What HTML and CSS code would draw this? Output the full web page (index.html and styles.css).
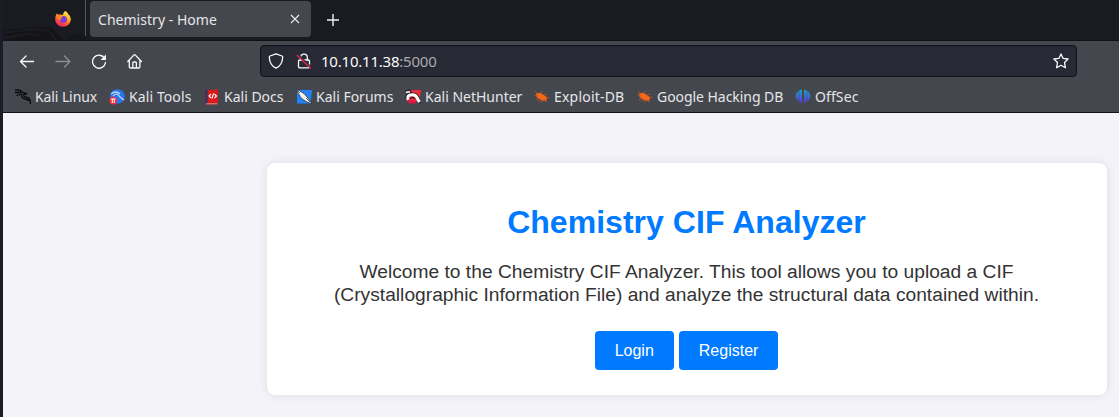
FILE: index.html
```
<!DOCTYPE html>
<html lang="en">
<head>
<meta charset="utf-8">
<title>Chemistry - Home</title>
<link rel="stylesheet" href="styles.css">
</head>
<body>
<div class="window">
  <header class="tabs">
    <div class="pinned">
      <svg class="wallpaper" width="83" height="40" viewBox="0 0 83 40"><path d="M0 31 32 27 48 27 60 40H0Z" fill="#131318"/><path d="M0 33 30 29 46 31 53 40M0 38 25 34 36 35" fill="none" stroke="#1c1d22" stroke-width="2"/><path d="M70 34 83 36V40H64Z" fill="#16171b"/></svg>
      <svg class="firefox" width="16" height="16" viewBox="0 0 16 16">
        <defs>
          <linearGradient id="fire" x1=".8" y1="0" x2=".25" y2="1"><stop offset="0" stop-color="#fff44f"/><stop offset=".35" stop-color="#ffb52b"/><stop offset=".65" stop-color="#ff5a33"/><stop offset="1" stop-color="#f5156c"/></linearGradient>
        </defs>
        <path d="M10.3 0C12 1 12.800 2.200 13.200 3.200 14.500 4 15.800 6 15.800 8.500A7.800 7.300 0 0 1 .2 8.500C.2 6 .8 4 2 2.300L3 3.900C4.200 3.200 5.500 3.300 6.300 3.800L8 3.900C8 2.500 9 1 10.300 0Z" fill="url(#fire)"/>
        <path d="M5 6.200 8 5.200C10 4.500 12.200 6 12 8.700 11.800 11 10 12 8 12S4.700 10.500 4.700 8.800L7 8.300Z" fill="#7d3bd3"/>
        <path d="M1 4.200C2.500 3.500 5 3.500 7.600 5.700L5.500 7.500 4.700 9.500 2 7Z" fill="#ff8a1e"/>
      </svg>
    </div>
    <div class="tab">
      <span class="tab-title">Chemistry - Home</span>
      <svg width="10" height="10" viewBox="0 0 10 10"><path d="m1 1 8 8M9 1 1 9" stroke="#ececee" stroke-width="1.1"/></svg>
    </div>
    <svg class="plus" width="14" height="14" viewBox="0 0 14 14"><path d="M7 1v12M1 7h12" stroke="#f2f2f3" stroke-width="1.4"/></svg>
  </header>
  <nav class="toolbar">
    <div class="nav-buttons">
      <svg width="16" height="16" viewBox="0 0 16 16"><path d="M14.500 8.500H2M7 3 1.500 8.500 7 14" class="line"/></svg>
      <svg width="16" height="16" viewBox="0 0 16 16" class="dim"><path d="M1 8.500h13M9.500 3 15 8.500 9.500 14" class="line"/></svg>
      <svg width="16" height="16" viewBox="0 0 16 16"><path d="M13.700 5.500A6.500 6.500 0 1 0 14.500 9.500" class="line"/><path d="M15 1.500v5.500H9.500Z" fill="#fbfbfe"/></svg>
      <svg width="16" height="16" viewBox="0 0 16 16"><path d="M.8 8.500 6.800 2.100Q7.600 1.300 8.400 2.100L14.400 8.500M2.300 7.500v6.200q0 1.300 1.300 1.300h8q1.300 0 1.300-1.300V7.500M5.800 15V10q0-1 1-1h1.600q1 0 1 1v5" class="line"/></svg>
    </div>
    <div class="address">
      <svg width="16" height="16" viewBox="0 0 16 16"><path d="M8 .8 14 3q.7.300.7 1C14.500 9 12.300 13.200 8 15.200 3.700 13.200 1.500 9 1.300 4q0-.7.700-1Z" class="line"/></svg>
      <svg class="lock" width="16" height="16" viewBox="0 0 16 16"><rect x="2.500" y="7" width="11" height="7.800" rx="1.200" class="line"/><path d="M4.700 7V4.500a3.300 3.300 0 0 1 6.600 0V7" class="line"/><path d="m2 1.500 13.500 13" stroke="#272934" stroke-width="1.500"/><path d="m.8 2 14 13.500" stroke="#e22850" stroke-width="1.400"/></svg>
      <span class="url">10.10.11.38<span class="port">:5000</span></span>
      <svg class="star" width="16" height="16" viewBox="0 0 16 16"><path d="m8 .9 2.100 4.500 5 .6-3.600 3.500.9 5.200L8 12.300l-4.400 2.400.9-5.200L.9 6l5-.6Z" class="line"/></svg>
    </div>
  </nav>
  <nav class="bookmarks">
    <a class="bm linux"><svg width="16" height="16" viewBox="0 0 16 16"><path d="M0 1 5 1.200 8.500 4 12 4.500 9 5.300Q8 8 12 8.500 15.500 9 15.500 15M0 3.500 6 3.500M1.500 6.500 6.500 5Q6.500 9.500 10 10 13 10.200 14 12" fill="none" stroke="#08090b" stroke-width="1.300"/></svg><span>Kali Linux</span></a>
    <a class="bm tools"><svg width="16" height="16" viewBox="0 0 16 16"><circle cx="8.500" cy="7.500" r="7.300" fill="#2674ee"/><path d="M2 5Q7 1 11 5M4 7Q8 3 10 7 12 9 15 11" fill="none" stroke="#b5d8ff" stroke-width="1.200"/><circle cx="4.200" cy="11.600" r="3.900" fill="#ed3037"/><path d="M2 10h4.500M3.300 10v4M5.300 10v4" stroke="#fff" stroke-width="1"/></svg><span>Kali Tools</span></a>
    <a class="bm docs"><svg width="16" height="16" viewBox="0 0 16 16"><path d="M1.500 1 14 .5V13L13 15.500H1.500Z" fill="#dc181d"/><path d="M1.500 1h2v13.500h-2Z" fill="#20376e"/><path d="M2 14.800h11.500" stroke="#c6b6ae" stroke-width=".8"/><path d="M7 5 5 7l2 2M10.500 5l2 2-2 2M9.500 4.500 8 9.500" fill="none" stroke="#fff" stroke-width="1.100"/></svg><span>Kali Docs</span></a>
    <a class="bm forums"><svg width="16" height="16" viewBox="0 0 16 16"><path d="M1 1h15l-1.500 13.500H1Z" fill="#2382f5"/><path d="M0 0 4 2 8 4.500 12 9 16 15 10 12.500 5 9 2.500 4.500Z" fill="#f3f3f2" stroke="#22252a" stroke-width=".7"/><path d="m1 1 3 3M10 9l4 4" stroke="#444" stroke-width=".8"/></svg><span>Kali Forums</span></a>
    <a class="bm hunter"><svg width="16" height="16" viewBox="0 0 16 16"><path d="M5.500 1H16L14.500 12H4Z" fill="#ee2a3a"/><path d="M.3 1.800 5 1.200 6 3.500M1.500 11Q-.5 5 6 4.200 11.500 3.500 14.500 9L15.500 14.500" fill="none" stroke="#24262b" stroke-width="1.400"/><path d="M3 11Q1.500 6 7 5.800 11 5.500 12.500 9.500L14.500 13" fill="none" stroke="#fff" stroke-width="3"/><path d="M1 3.200 5 2.800" stroke="#fff" stroke-width="1.400"/><path d="M2.500 11.500Q5 14.200 11 13" fill="none" stroke="#d91a42" stroke-width="2.600"/><path d="M5 10Q7.500 6.800 10 10" fill="#d91a42" stroke="#24262b" stroke-width="1.100"/></svg><span>Kali NetHunter</span></a>
    <a class="bm exploit"><svg width="16" height="16" viewBox="0 0 16 16"><path d="M2 5Q5.500 2.500 9 5.500L13.500 8.500 12.500 10.500 12 12Q8 12.500 5 10L2.500 8Z" fill="#f36716"/><path d="M4 5 1 2M7 4.500 8 2.500M10 6 13 5M12 9 15.500 8M10 11 13 13M7 10 4 12.500M5 9 2 11M4 7 .5 6M9 11 7 13.500" stroke="#b3552a" stroke-width=".9"/></svg><span>Exploit-DB</span></a>
    <a class="bm google"><svg width="16" height="16" viewBox="0 0 16 16"><path d="M2 5Q5.500 2.500 9 5.500L13.500 8.500 12.500 10.500 12 12Q8 12.500 5 10L2.500 8Z" fill="#f36716"/><path d="M4 5 1 2M7 4.500 8 2.500M10 6 13 5M12 9 15.500 8M10 11 13 13M7 10 4 12.500M5 9 2 11M4 7 .5 6M9 11 7 13.500" stroke="#b3552a" stroke-width=".9"/></svg><span>Google Hacking DB</span></a>
    <a class="bm offsec"><svg width="16" height="16" viewBox="0 0 16 16"><defs><linearGradient id="off" x2="0" y2="1"><stop stop-color="#15a7c4"/><stop offset="1" stop-color="#632be0"/></linearGradient></defs><path d="M3.800 1.700V12Q.5 10 .5 7T3.800 1.700ZM4.300 1.300 7 .5V15Q6.500 13 4.300 12.500ZM9 .5 11.700 1.300V12.500Q9.500 13 9 15ZM12.200 1.700Q15.500 4 15.500 7T12.200 12Z" fill="url(#off)"/></svg><span>OffSec</span></a>
  </nav>
  <main class="page">
    <section class="card">
      <h1>Chemistry CIF Analyzer</h1>
      <p>Welcome to the Chemistry CIF Analyzer. This tool allows you to upload a CIF (Crystallographic Information File) and analyze the structural data contained within.</p>
      <div class="actions"><a class="button">Login</a><a class="button">Register</a></div>
    </section>
  </main>
</div>
</body>
</html>
```
FILE: styles.css
```
* { box-sizing: border-box; }
body { margin: 0; background: #f4f3f9; }
svg { display: block; flex: none; }
.window { height: 417px; border-left: 3px solid #1b1c27; overflow: hidden; font-family: "Noto Sans", sans-serif; font-size: 14px; color: #e6e6e8; }
.tabs { height: 41px; background: #1a1b20; border-bottom: 1px solid #101115; display: flex; align-items: center; }
.pinned { width: 83px; height: 40px; border-right: 1px solid #55565a; position: relative; padding: 11px 0 0 52px; }
.wallpaper { position: absolute; left: 0; top: 0; }
.firefox { position: relative; }
.tab { width: 221px; height: 36px; margin: 0 0 3px 4px; border-radius: 4px; background: #45474e; display: flex; align-items: center; justify-content: space-between; padding: 2px 11px 0 8px; }
.tab-title { letter-spacing: .03px; }
.tab svg { margin-top: -2px; }
.plus { margin: -1px 0 0 15px; }
.line { fill: none; stroke: #fbfbfe; stroke-width: 1.3; stroke-linecap: round; stroke-linejoin: round; }
.dim { opacity: .4; }
.toolbar { height: 40px; background: #45474e; display: flex; align-items: center; }
.nav-buttons { display: flex; gap: 20px; padding-left: 16px; width: 257px; }
.address { width: 817px; height: 32px; border: 1px solid #111217; border-radius: 4px; background: #272934; display: flex; align-items: center; padding: 0 7px; }
.lock { margin-left: 12px; }
.url { margin-left: 9px; font-size: 15px; letter-spacing: -.22px; color: #fbfbfe; }
.port { color: #a8a9b0; }
.star { margin-left: auto; }
.bookmarks { height: 32px; background: #45474e; border-bottom: 1px solid #111217; display: flex; align-items: center; padding-left: 12px; white-space: nowrap; }
.bm { display: flex; align-items: center; gap: 4px; }
.linux { width: 94px; letter-spacing: -.1px; }
.tools { width: 95px; letter-spacing: .1px; }
.docs { width: 92px; }
.forums { width: 109px; }
.hunter { width: 129px; }
.exploit { width: 103px; letter-spacing: .2px; }
.google { width: 158px; letter-spacing: -.05px; }
.offsec { letter-spacing: .1px; }
.page { height: 304px; background: #f4f3f9; padding: 50px 12px 0 264px; font-family: "Liberation Sans", Arial, sans-serif; }
.card { width: 840px; height: 232px; border-radius: 8px; background: #fff; box-shadow: 0 0 10px rgba(0, 0, 0, .1); padding: 41px 51px 0 50px; text-align: center; color: #333; }
h1 { margin: 0; font-size: 32px; line-height: 37px; letter-spacing: .03px; color: #007bff; }
p { margin: 19px 0 25px; font-size: 19.2px; line-height: 23px; letter-spacing: .015px; }
.actions { display: flex; justify-content: center; gap: 5px; }
.button { height: 39px; padding: 0 20px; border-radius: 4px; background: #007bff; color: #fff; font-size: 16px; line-height: 39px; }
```
